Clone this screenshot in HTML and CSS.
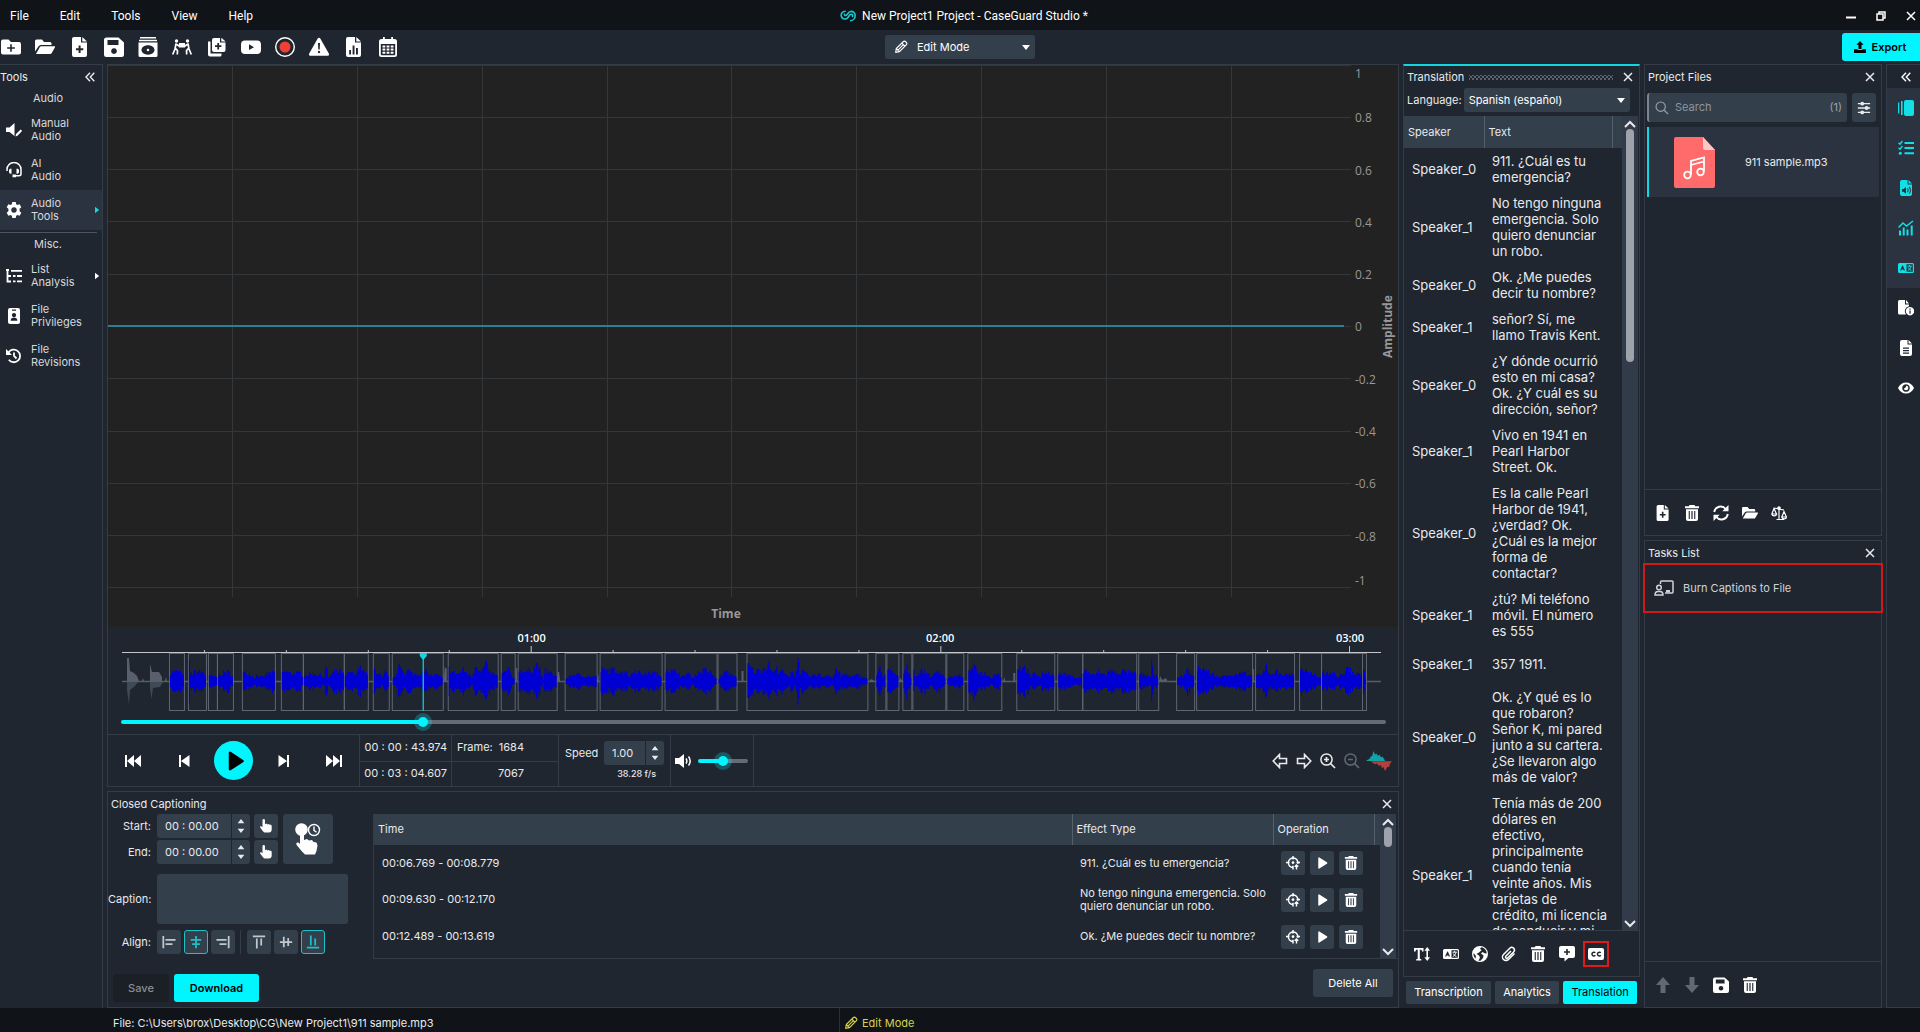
FILE: index.html
```html
<!DOCTYPE html>
<html lang="en">
<head>
<meta charset="utf-8">
<title>New Project1 Project - CaseGuard Studio</title>
<link rel="stylesheet" href="styles.css">
</head>
<body>
<svg class="sprite" aria-hidden="true">
  <symbol id="folder-plus" viewBox="0 0 20 20"><path fill-rule="evenodd" d="M2 2.500h5.500l2.500 2.500h8a2 2 0 0 1 2 2v8.500a2 2 0 0 1-2 2H2a2 2 0 0 1-2-2v-11a2 2 0 0 1 2-2zM9.200 7.200v3H6.200v1.600h3v3h1.600v-3h3v-1.600h-3v-3z"/></symbol>
  <symbol id="folder-open" viewBox="0 0 20 20"><path d="M0 14.500V4a1.500 1.500 0 0 1 1.500-1.500H7l2 2.500h6a1.500 1.500 0 0 1 1.500 1.500V8H6a3 3 0 0 0-2.600 1.500zM1 17l3.700-6.700A2 2 0 0 1 6.400 9.300H19.500c.500 0 .700.500.500.900l-3.400 6.100a1.500 1.500 0 0 1-1.300.7z"/></symbol>
  <symbol id="file-plus" viewBox="0 0 20 20"><path fill-rule="evenodd" d="M4 0h7v5.500h6V18a2 2 0 0 1-2 2H4a2 2 0 0 1-2-2V2a2 2 0 0 1 2-2zM12.300 0L17 4.400h-4.700zM8.600 8.500v2.700H6v2h2.600v2.700h2v-2.700h2.700v-2h-2.700V8.500z"/></symbol>
  <symbol id="save" viewBox="0 0 20 20"><path fill-rule="evenodd" d="M2.500.500h12L20 5.500v12a2.500 2.500 0 0 1-2.500 2.500h-15A2.500 2.500 0 0 1 0 17.500V3A2.500 2.500 0 0 1 2.500.500zM3.500 3v5h11V3zM10 11.200a2.900 2.900 0 1 0 .01 0z"/></symbol>
  <symbol id="disc-box" viewBox="0 0 20 20"><path fill-rule="evenodd" d="M2 0h16v1.500H2zM1 2.700h18v1.500H1zM.500 5.500h19v13a1.500 1.500 0 0 1-1.500 1.500H2a1.500 1.500 0 0 1-1.500-1.500zM10 8.300c-4 0-6.500 2.200-6.500 4.700s2.500 4.700 6.500 4.700 6.500-2.200 6.500-4.700-2.500-4.700-6.500-4.700zM10 11.700a1.300 1.300 0 1 1 0 2.600 1.300 1.300 0 0 1 0-2.600z"/></symbol>
  <symbol id="carry" viewBox="0 0 20 20"><circle cx="4.500" cy="4" r="1.700"/><circle cx="15.500" cy="4" r="1.700"/><path d="M7 6h6v4.500H7z"/><path d="M4 6.500l-.8 4.500L5.500 13.500 5.300 17.500M3.200 11.500L.700 17.500M4 7L7.500 9.300M16 6.500l.800 4.500L14.500 13.500l.2 4M16.800 11.500l2.500 6M16 7l-3.500 2.300" fill="none" stroke="currentColor" stroke-width="1.700"/></symbol>
  <symbol id="files-plus" viewBox="0 0 20 20"><path fill-rule="evenodd" d="M7 1h6v4.500h5.500V13a2 2 0 0 1-2 2H7a2 2 0 0 1-2-2V3a2 2 0 0 1 2-2zM14.300.700l4.400 3.800h-4.400zM10.300 6v2.300H8v1.800h2.300v2.300h1.800v-2.300h2.300V8.300h-2.300V6z"/><path d="M1 4.500h2.500V16a.5.5 0 0 0 .5.500h10.500V18a1.500 1.500 0 0 1-1.500 1.500H3a2 2 0 0 1-2-2z"/></symbol>
  <symbol id="video" viewBox="0 0 20 20"><path fill-rule="evenodd" d="M4 3.500h12a4 4 0 0 1 4 4v5.500a4 4 0 0 1-4 4H4a4 4 0 0 1-4-4V7.500a4 4 0 0 1 4-4zM8 7.300v5.800l5-2.900z"/></symbol>
  <symbol id="record" viewBox="0 0 20 20"><circle cx="10" cy="10" r="9.300" fill="none" stroke="currentColor" stroke-width="1.400"/><circle cx="10" cy="10" r="5.500" fill="#ef4036"/></symbol>
  <symbol id="warning" viewBox="0 0 20 20"><path fill-rule="evenodd" d="M10 .800c.6 0 1 .3 1.300.8l8.500 15c.6 1.100-.1 2.200-1.300 2.200h-17C.3 18.800-.4 17.700.2 16.600l8.500-15c.3-.5.700-.8 1.300-.8zM9 6l.3 6.500h1.400L11 6zM10 13.800a1.200 1.200 0 1 0 .01 0z"/></symbol>
  <symbol id="file-chart" viewBox="0 0 20 20"><path fill-rule="evenodd" d="M4 0h7v5.500h6V18a2 2 0 0 1-2 2H4a2 2 0 0 1-2-2V2a2 2 0 0 1 2-2zM12.300 0L17 4.400h-4.700zM5.200 13v4.500H7V13zM8.600 8.500v9h1.900v-9zM12 11v6.500h1.900V11z"/></symbol>
  <symbol id="calendar" viewBox="0 0 20 20"><path fill-rule="evenodd" d="M5 0h1.800v2h6.400V0H15v2h1.500A2.500 2.500 0 0 1 19 4.500v13a2.500 2.500 0 0 1-2.500 2.500h-13A2.500 2.500 0 0 1 1 17.500v-13A2.500 2.500 0 0 1 3.500 2H5zM2.800 7v10.500c0 .5.400.8.800.8h12.800c.4 0 .8-.3.800-.8V7z"/><path d="M4.500 8.500h2.800v2H4.500zm4.100 0h2.800v2H8.600zm4.100 0h2.800v2h-2.800zM4.500 11.600h2.800v2H4.500zm4.100 0h2.800v2H8.600zm4.100 0h2.800v2h-2.800zM4.500 14.700h2.800v2H4.500zm4.100 0h2.800v2H8.600zm4.100 0h2.800v2h-2.800z"/></symbol>
  <symbol id="pencil" viewBox="0 0 16 16"><path d="M2 14l.6-4.300L10.500 2a2 2 0 0 1 2.800 0l.7.7a2 2 0 0 1 0 2.800L6.200 13.300zM9 3.600l3.400 3.400M4.500 11.500L11 5M2.600 9.700l3.600 3.600" fill="none" stroke="currentColor" stroke-width="1.300"/></symbol>
  <symbol id="upload" viewBox="0 0 16 16"><path d="M8 0l4.800 5H10v5.500H6V5H3.200zM0 11h4.800v1h6.400v-1H16v5H0z"/></symbol>
  <symbol id="logo" viewBox="0 0 16 12"><path d="M5.800 1.200C2.300 1.200.8 3.800 1.200 6c.5 2.600 3.300 3.600 5.600 2.500M4.800 3.600c-1 1.400.2 2.400 1.600 1.600C7.800 4.300 8.300 2 10.600 1.500c2.500-.5 4.600 1.400 4.600 4 0 3-2.300 5.300-5.200 5.300M6.800 8.500C9 7.300 9 4.300 11.200 4.300c1.500 0 2 1.500.9 2.800" fill="none" stroke="currentColor" stroke-width="1.600"/></symbol>
  <symbol id="minimize" viewBox="0 0 10 10"><path d="M0 5.500h10v2H0z"/></symbol>
  <symbol id="restore" viewBox="0 0 10 10"><path d="M1 3h6v6H1zM3 3V1h6v6H7" fill="none" stroke="currentColor" stroke-width="1.500"/></symbol>
  <symbol id="close" viewBox="0 0 10 10"><path d="M1 1l8 8M9 1L1 9" fill="none" stroke="currentColor" stroke-width="1.500"/></symbol>
  <symbol id="chevrons" viewBox="0 0 10 10"><path d="M5 .8L1 5l4 4.200M9.300.800L5.300 5l4 4.200" fill="none" stroke="currentColor" stroke-width="1.400"/></symbol>
  <symbol id="speaker-edit" viewBox="0 0 16 16"><path d="M0 5.500h3.500L8.500 1v13l-5-4H0zM9.500 14.500l.5-2.500 4.700-4.600 1.500 1.500-4.700 4.800z"/></symbol>
  <symbol id="headset" viewBox="0 0 16 16"><path d="M1 9V7.500a7 7 0 0 1 14 0v4.300a2 2 0 0 1-2 2H9.500" fill="none" stroke="currentColor" stroke-width="1.500"/><path d="M4 6.800h1.500v5H4.500A2 2 0 0 1 3 10V8zM12 6.800h-1.500v5h1A2 2 0 0 0 13 10V8zM6.500 12.500h3.500v2.700H6.500z"/></symbol>
  <symbol id="gear" viewBox="0 0 16 16"><path fill-rule="evenodd" d="M6.300 0h3.400l.5 2.300 1.200.7 2.200-.7 1.700 2.900-1.700 1.600v2.400l1.700 1.600-1.700 2.900-2.200-.7-1.200.7-.5 2.300H6.300l-.5-2.300-1.200-.7-2.200.7L.7 10.800l1.700-1.600V6.800L.7 5.200l1.700-2.900 2.200.7 1.200-.7zM8 5.200a2.800 2.800 0 1 0 .01 0z"/></symbol>
  <symbol id="list-tree" viewBox="0 0 16 16"><path d="M0 2h3M1.500 2v11.500H5M1.500 8H5M5 2.800h11M7 8h2.500M11 8h5M7 13.300h2.500M11 13.300h5" fill="none" stroke="currentColor" stroke-width="1.800"/></symbol>
  <symbol id="id-badge" viewBox="0 0 16 16"><path fill-rule="evenodd" d="M4 0h8a2 2 0 0 1 2 2v12a2 2 0 0 1-2 2H4a2 2 0 0 1-2-2V2a2 2 0 0 1 2-2zM6 1.500v1.200h4V1.500zM8 5a2.100 2.100 0 1 0 .01 0zM4.700 12.700h6.600c0-2-1.100-2.900-2.300-2.900H7c-1.200 0-2.300.9-2.300 2.900z"/></symbol>
  <symbol id="history" viewBox="0 0 16 16"><path d="M2.500 4.500a6.300 6.300 0 1 1 .3 7.300M8 4.500V8l2.500 2.500" fill="none" stroke="currentColor" stroke-width="1.800"/><path d="M0 1v6h6z"/></symbol>
  <symbol id="skip-start" viewBox="0 0 16 16"><path d="M0 2h2v12H0zM9 2v12L2 8zM16 2v12L9 8z"/></symbol>
  <symbol id="skip-end" viewBox="0 0 16 16"><path d="M14 2h2v12h-2zM7 2v12l7-6zM0 2v12l7-6z"/></symbol>
  <symbol id="step-back" viewBox="0 0 16 16"><path d="M3 2h2v12H3zM13.500 2v12L5 8z"/></symbol>
  <symbol id="step-fwd" viewBox="0 0 16 16"><path d="M11 2h2v12h-2zM2.500 2v12L11 8z"/></symbol>
  <symbol id="play" viewBox="0 0 16 16"><path d="M3 1.500a1 1 0 0 1 1.500-.9l10 6.500a1 1 0 0 1 0 1.800l-10 6.500a1 1 0 0 1-1.500-.9z"/></symbol>
  <symbol id="volume" viewBox="0 0 16 16"><path d="M0 5h4l5-4v14l-5-4H0z"/><path d="M11 5.500c1 1.500 1 3.500 0 5M13.500 3.500c2 2.700 2 6.300 0 9" fill="none" stroke="currentColor" stroke-width="1.500"/></symbol>
  <symbol id="arrow-left" viewBox="0 0 16 16"><path d="M1.200 8L7.500 1.500v4h7v5h-7v4z" fill="none" stroke="currentColor" stroke-width="1.600"/></symbol>
  <symbol id="arrow-right" viewBox="0 0 16 16"><path d="M14.800 8L8.500 1.500v4h-7v5h7v4z" fill="none" stroke="currentColor" stroke-width="1.600"/></symbol>
  <symbol id="zoom-in" viewBox="0 0 16 16"><path d="M10.500 10.500L15 15M6.500 4v5M4 6.500h5" fill="none" stroke="currentColor" stroke-width="1.700"/><circle cx="6.500" cy="6.500" r="5.600" fill="none" stroke="currentColor" stroke-width="1.500"/></symbol>
  <symbol id="zoom-out" viewBox="0 0 16 16"><path d="M10.500 10.500L15 15M4 6.500h5" fill="none" stroke="currentColor" stroke-width="1.700"/><circle cx="6.500" cy="6.500" r="5.600" fill="none" stroke="currentColor" stroke-width="1.500"/></symbol>
  <symbol id="wave-icon" viewBox="0 0 26 20"><path d="M0 10l2-1.500 1.500-.5L5 5l1 .5L7.500 0 9 3.500l1.500-1L12 5l1.500-1.500L15 6.500l1.500-1L18 8l1 2z" fill="#12a3a8"/><path d="M5 10.300h21l-2 2.500-1 3.500-1.500-.5L19 20l-1.500-4-1.500 1-1.500-3-1.500 1L11 12.500l-2 .8-2-1.300z" fill="#b0413e"/></symbol>
  <symbol id="hand" viewBox="0 0 16 16"><path d="M4 1.500a1.400 1.400 0 0 1 2.800 0V6l1.700-.8 1.200 1 1.500-.6 1.100 1.100c1.500-.4 2.200.3 2.200 1.500V12c0 2-1.200 3.500-3.200 3.500H7.500c-1.300 0-2.200-.5-3-1.500L1.300 9.700c-.6-1 .7-2 1.700-1.200L4 9.300z"/></symbol>
  <symbol id="hand-clock" viewBox="0 0 26 32"><circle cx="6.500" cy="6.500" r="6.300"/><path d="M5 10h4v7l3-1 2 1.500 3-.5 1.500 2 3 .5 1 3-1 5.500-1.500 3.500H10l-3-3-5-6c-2-2.500.500-3.500 2-2.500L5 21z"/><circle cx="19" cy="7" r="5.500" fill="none" stroke="currentColor" stroke-width="1.400"/><path d="M19 3.500v3.800l2.500 2" fill="none" stroke="currentColor" stroke-width="1.400"/></symbol>
  <symbol id="al-left" viewBox="0 0 16 16"><path d="M1.500 1v14M4 5.500h11.500M4 10.500h8" fill="none" stroke="currentColor" stroke-width="2"/></symbol>
  <symbol id="al-center" viewBox="0 0 16 16"><path d="M8 1v14M2 5.500h12M3.500 10.500h9" fill="none" stroke="currentColor" stroke-width="2"/></symbol>
  <symbol id="al-right" viewBox="0 0 16 16"><path d="M14.500 1v14M.5 5.500H12M4 10.500h8" fill="none" stroke="currentColor" stroke-width="2"/></symbol>
  <symbol id="al-top" viewBox="0 0 16 16"><path d="M1 1.500h14M5.500 4v11.500M10.500 4v8" fill="none" stroke="currentColor" stroke-width="2"/></symbol>
  <symbol id="al-middle" viewBox="0 0 16 16"><path d="M1 8h14M5.500 2v12M10.500 3.500v9" fill="none" stroke="currentColor" stroke-width="2"/></symbol>
  <symbol id="al-bottom" viewBox="0 0 16 16"><path d="M1 14.500h14M5.500.5V12M10.500 4v8" fill="none" stroke="currentColor" stroke-width="2"/></symbol>
  <symbol id="target" viewBox="0 0 16 16"><path d="M8 0v4M0 7.500h4M8 11v4.500M13.500 9A5.500 5.500 0 1 0 8 13.300M8 6v3M6.500 7.500h3" fill="none" stroke="currentColor" stroke-width="1.700"/><path d="M12 15.500v-5M10 12.300l2-2 2 2M12 7.500h4" fill="none" stroke="currentColor" stroke-width="1.600"/></symbol>
  <symbol id="trash" viewBox="0 0 16 16"><path fill-rule="evenodd" d="M5.500 0h5l.7 1.200H15v2H1v-2h3.800zM2 4.300h12V14a2 2 0 0 1-2 2H4a2 2 0 0 1-2-2zM4.700 6v8h1.100V6zm2.700 0v8h1.200V6zm2.800 0v8h1.100V6z"/></symbol>
  <symbol id="refresh" viewBox="0 0 16 16"><path d="M1.200 7a6.500 6.500 0 0 1 11.500-3M14.800 9a6.500 6.500 0 0 1-11.500 3" fill="none" stroke="currentColor" stroke-width="1.900"/><path d="M15.500 0v6.300H9.300zM.5 16V9.700h6.200z"/></symbol>
  <symbol id="scales" viewBox="0 0 16 16"><path d="M3 3l10 2M8 2v13M5.500 14.500H13M3 3.500L.8 9h4.700zM13 6.500L10.800 12h4.600zM1 9.500c.5 1.800 4 1.800 4.500 0M11 12.500c.5 1.800 4 1.800 4.400 0" fill="none" stroke="currentColor" stroke-width="1.200"/><circle cx="8" cy="3" r="1.800"/></symbol>
  <symbol id="presenter" viewBox="0 0 20 16"><path d="M6.500 4V2a1 1 0 0 1 1-1H18a1 1 0 0 1 1 1v10a1 1 0 0 1-1 1h-7M1 15c0-2.500 1.500-3.500 3-3.500h2c1.500 0 3 1 3 3.500z" fill="none" stroke="currentColor" stroke-width="1.500"/><circle cx="5" cy="7.500" r="2.300" fill="none" stroke="currentColor" stroke-width="1.500"/><path d="M12 10h4v2.500h-4z"/></symbol>
  <symbol id="arrow-up" viewBox="0 0 16 16"><path d="M8 0l7 8h-4.500v8h-5V8H1z"/></symbol>
  <symbol id="arrow-down" viewBox="0 0 16 16"><path d="M8 16l7-8h-4.500V0h-5v8H1z"/></symbol>
  <symbol id="text-height" viewBox="0 0 16 16"><path d="M0 2h9.500v3.500H8l-.5-1.700H5.800v9l1.500.4v1.300H2.200v-1.300l1.500-.4v-9H2l-.5 1.700H0zM13.200 1l2.800 3.700h-2v6.600h2L13.200 15l-2.800-3.700h2V4.700h-2z"/></symbol>
  <symbol id="lang-box" viewBox="0 0 16 16"><path fill-rule="evenodd" d="M1.500 3h13A1.500 1.500 0 0 1 16 4.500v7a1.500 1.500 0 0 1-1.500 1.500h-13A1.500 1.500 0 0 1 0 11.500v-7A1.500 1.500 0 0 1 1.500 3zM8.500 4.200v7.600h6.300V4.200zM4.300 5.500L2 10.500h1.300l.4-1h1.600l.4 1H7L4.900 5.500z"/><path d="M9.500 6.200h4.300M11.600 5v1.200M13 6.500c-.5 2-1.700 3.300-3.300 4.200M10.300 7.500c.7 1.500 1.700 2.500 3.200 3.200" fill="none" stroke="currentColor" stroke-width="1"/></symbol>
  <symbol id="globe" viewBox="0 0 16 16"><path fill-rule="evenodd" d="M8 0a8 8 0 1 1 0 16A8 8 0 0 1 8 0zM9.500 1.300L8 2.500l1.500 1.700L7 6.500 4.500 8 7 9.500l1 2-1.500 3.200 2 .1L11 12l.5-2.500L9 7.500l1.500-1.500 2 1.200 2.200.3c0-3-2.200-5.500-5.200-6.200zM1.500 7L4 10l-.5 2.500C2 11.300 1.200 9 1.500 7z"/></symbol>
  <symbol id="clip" viewBox="0 0 16 16"><path d="M13.500 7.500l-6 6a3.500 3.500 0 0 1-5-5l6.300-6.300a2.600 2.600 0 0 1 3.800 3.700l-6 6a1.200 1.200 0 0 1-1.800-1.700L10 5" fill="none" stroke="currentColor" stroke-width="1.500"/></symbol>
  <symbol id="comment-plus" viewBox="0 0 16 16"><path fill-rule="evenodd" d="M2 0h12a2 2 0 0 1 2 2v8a2 2 0 0 1-2 2H9.500L5.500 15.500V12H2a2 2 0 0 1-2-2V2a2 2 0 0 1 2-2zM7.200 3v2.300H5v1.500h2.200V9h1.600V6.800H11V5.300H8.800V3z"/></symbol>
  <symbol id="cc" viewBox="0 0 16 16"><path fill-rule="evenodd" d="M2 2h12a2 2 0 0 1 2 2v8a2 2 0 0 1-2 2H2a2 2 0 0 1-2-2V4a2 2 0 0 1 2-2z"/><path d="M7.300 6.800a1.900 1.900 0 1 0 0 2.500M12.800 6.800a1.900 1.900 0 1 0 0 2.500" fill="none" stroke="#20262f" stroke-width="1.500"/></symbol>
  <symbol id="search" viewBox="0 0 16 16"><circle cx="6.500" cy="6.500" r="5.300" fill="none" stroke="currentColor" stroke-width="1.300"/><path d="M10.500 10.500L15 15" stroke="currentColor" stroke-width="1.500"/></symbol>
  <symbol id="sliders" viewBox="0 0 16 16"><path d="M1 3h14M1 8h14M1 13h14" stroke="currentColor" stroke-width="1.500"/><circle cx="6" cy="3" r="2.200"/><circle cx="11" cy="8" r="2.200"/><circle cx="6" cy="13" r="2.200"/></symbol>
  <symbol id="cards" viewBox="0 0 16 16"><rect x="6" width="10" height="16" rx="2"/><path d="M3 1h1.600v14H3zM0 2.500h1.300v11H0z"/></symbol>
  <symbol id="checklist" viewBox="0 0 16 16"><path d="M6.500 3H16M6.500 8H16M6.500 13.300H16" stroke="currentColor" stroke-width="1.900"/><path d="M.5 2.800l1.500 1.400L4.500 1M.5 7.800L2 9.200 4.500 6" fill="none" stroke="currentColor" stroke-width="1.300"/><circle cx="2.300" cy="13.300" r="1.500"/></symbol>
  <symbol id="file-audio" viewBox="0 0 16 16"><path fill-rule="evenodd" d="M4 0h5.500v4.500H14V14a2 2 0 0 1-2 2H4a2 2 0 0 1-2-2V2a2 2 0 0 1 2-2zM10.500 0L14 3.500h-3.500zM4 9v2.700h1.500L8 13.700V7L5.500 9zM9 8.700c.8.800.8 2.300 0 3.200l.7.700c1.300-1.400 1.300-3.300 0-4.600zM10.700 7.200c1.700 1.800 1.700 4.400 0 6.200l.7.700c2.100-2.200 2.100-5.400 0-7.600z"/></symbol>
  <symbol id="trend" viewBox="0 0 16 16"><path d="M.5 7.500L5 3l3.500 3L15 1" fill="none" stroke="currentColor" stroke-width="1.500"/><path d="M2 15.500V10.500M5.700 15.500V7.500M9.500 15.500V9.500M13.700 15.500V5.500" stroke="currentColor" stroke-width="2"/></symbol>
  <symbol id="file-info" viewBox="0 0 16 16"><path d="M1.500 0H7v4.500h4v1.800A5 5 0 0 0 8 14.500H1.500A1.500 1.500 0 0 1 0 13V1.500A1.500 1.500 0 0 1 1.500 0zM8 0l3 3.500H8z"/><path fill-rule="evenodd" d="M12 7a4.200 4.200 0 1 1-.01 0zM11.400 8.500v1.300h1.200V8.500zm0 2v3.300h1.200v-3.300z"/></symbol>
  <symbol id="file-text" viewBox="0 0 16 16"><path fill-rule="evenodd" d="M4 0h5.500v4.500H14V14a2 2 0 0 1-2 2H4a2 2 0 0 1-2-2V2a2 2 0 0 1 2-2zM10.500 0L14 3.500h-3.500zM5 7.500v1.200h6V7.500zm0 2.500v1.200h6V10zm0 2.500v1.200h6v-1.200z"/></symbol>
  <symbol id="eye" viewBox="0 0 16 16"><path fill-rule="evenodd" d="M8 2.500c3.500 0 6.500 2 8 5.500-1.500 3.500-4.500 5.500-8 5.500S1.500 11.500 0 8c1.500-3.500 4.500-5.500 8-5.500zM8 4.200a3.800 3.800 0 1 0 .01 0zM8 5.700a2.300 2.300 0 1 1-2.200 2.500c1.300.3 2.300-1 2.200-2.500z"/></symbol>
  <symbol id="music-file" viewBox="0 0 41 51"><path d="M2 0h27l12 13v36a2 2 0 0 1-2 2H2a2 2 0 0 1-2-2V2a2 2 0 0 1 2-2z" fill="#ff6b6b"/><path d="M29 0l12 13H31a2 2 0 0 1-2-2z" fill="#ffc6c6"/><path d="M17 37.500V24l13-3.500V34M17 28l13-3.500" fill="none" stroke="#fff" stroke-width="1.800"/><circle cx="13.500" cy="38" r="3.300" fill="none" stroke="#fff" stroke-width="1.800"/><circle cx="26.500" cy="35" r="3.300" fill="none" stroke="#fff" stroke-width="1.800"/></symbol>
  <symbol id="tri-up" viewBox="0 0 8 6"><path d="M4 0l4 5H0z"/></symbol>
  <symbol id="tri-down" viewBox="0 0 8 6"><path d="M4 6L0 1h8z"/></symbol>
  <symbol id="tri-right" viewBox="0 0 6 8"><path d="M0 0l5 4-5 4z"/></symbol>
  <symbol id="caret-up" viewBox="0 0 12 8"><path d="M1 7l5-5 5 5" fill="none" stroke="currentColor" stroke-width="2"/></symbol>
  <symbol id="caret-down" viewBox="0 0 12 8"><path d="M1 1l5 5 5-5" fill="none" stroke="currentColor" stroke-width="2"/></symbol>
</svg>

<div class="app">
  <header class="titlebar">
    <nav class="menu"><a href="#">File</a><a href="#">Edit</a><a href="#">Tools</a><a href="#">View</a><a href="#">Help</a></nav>
    <div class="app-title"><svg class="logo"><use href="#logo"/></svg><span>New Project1 Project - CaseGuard Studio *</span></div>
    <div class="win-controls">
      <button aria-label="Minimize"><svg class="i10"><use href="#minimize"/></svg></button>
      <button aria-label="Restore"><svg class="i10"><use href="#restore"/></svg></button>
      <button aria-label="Close window"><svg class="i10"><use href="#close"/></svg></button>
    </div>
  </header>

  <div class="toolbar">
    <div class="tool-icons">
      <button aria-label="New project"><svg class="i20"><use href="#folder-plus"/></svg></button>
      <button aria-label="Open project"><svg class="i20"><use href="#folder-open"/></svg></button>
      <button aria-label="Add file"><svg class="i20"><use href="#file-plus"/></svg></button>
      <button aria-label="Save project"><svg class="i20"><use href="#save"/></svg></button>
      <button aria-label="Disc archive"><svg class="i20"><use href="#disc-box"/></svg></button>
      <button aria-label="Transfer"><svg class="i20"><use href="#carry"/></svg></button>
      <button aria-label="Add many files"><svg class="i20"><use href="#files-plus"/></svg></button>
      <button aria-label="Video"><svg class="i20"><use href="#video"/></svg></button>
      <button aria-label="Record"><svg class="i20"><use href="#record"/></svg></button>
      <button aria-label="Warnings"><svg class="i20"><use href="#warning"/></svg></button>
      <button aria-label="Report"><svg class="i20"><use href="#file-chart"/></svg></button>
      <button aria-label="Calendar"><svg class="i20"><use href="#calendar"/></svg></button>
    </div>
    <div class="select mode-select">
      <svg class="i14"><use href="#pencil"/></svg>
      <select aria-label="Mode"><option>Edit Mode</option></select>
      <svg class="drop"><use href="#tri-down"/></svg>
    </div>
    <button class="export"><svg class="i12"><use href="#upload"/></svg>Export</button>
  </div>

  <main class="workspace">
    <aside class="tools">
      <div class="tools-head"><span>Tools</span><button aria-label="Collapse tools"><svg class="i10"><use href="#chevrons"/></svg></button></div>
      <h3>Audio</h3>
      <button class="tool"><svg class="i16"><use href="#speaker-edit"/></svg><span>Manual<br>Audio</span></button>
      <button class="tool"><svg class="i16"><use href="#headset"/></svg><span>AI<br>Audio</span></button>
      <button class="tool on"><svg class="i16"><use href="#gear"/></svg><span>Audio<br>Tools</span><svg class="more"><use href="#tri-right"/></svg></button>
      <hr>
      <h3>Misc.</h3>
      <button class="tool"><svg class="i16"><use href="#list-tree"/></svg><span>List<br>Analysis</span><svg class="more"><use href="#tri-right"/></svg></button>
      <button class="tool"><svg class="i16"><use href="#id-badge"/></svg><span>File<br>Privileges</span></button>
      <button class="tool"><svg class="i16"><use href="#history"/></svg><span>File<br>Revisions</span></button>
    </aside>

    <div class="center">
      <section class="panel player">
        <div class="chart">
          <svg class="plot" id="plot"></svg>
          <div class="y-labels"><span>1</span><span>0.8</span><span>0.6</span><span>0.4</span><span>0.2</span><span>0</span><span>-0.2</span><span>-0.4</span><span>-0.6</span><span>-0.8</span><span>-1</span></div>
          <div class="y-title">Amplitude</div>
          <div class="x-title">Time</div>
        </div>
        <div class="timeline">
          <div class="minutes"><span>01:00</span><span>02:00</span><span>03:00</span></div>
          <svg class="waveform" id="waveform" viewBox="122 646 1262 66" preserveAspectRatio="none"></svg>
          <input class="seek" type="range" aria-label="Position" min="0" max="1000" value="237">
        </div>
        <div class="transport">
          <div class="buttons">
            <button aria-label="To start"><svg class="i16"><use href="#skip-start"/></svg></button>
            <button aria-label="Step back"><svg class="i16"><use href="#step-back"/></svg></button>
            <button class="play" aria-label="Play"><svg class="i20"><use href="#play"/></svg></button>
            <button aria-label="Step forward"><svg class="i16"><use href="#step-fwd"/></svg></button>
            <button aria-label="To end"><svg class="i16"><use href="#skip-end"/></svg></button>
          </div>
          <div class="stack times"><span>00 : 00 : 43.974</span><span>00 : 03 : 04.607</span></div>
          <div class="stack frames"><span><i>Frame:</i>1684</span><span>7067</span></div>
          <div class="speed">
            <label for="speed">Speed</label>
            <div class="spin"><input id="speed" value="1.00"><div class="steps"><button aria-label="Faster"><svg><use href="#tri-up"/></svg></button><button aria-label="Slower"><svg><use href="#tri-down"/></svg></button></div></div>
            <small>38.28 f/s</small>
          </div>
          <div class="vol"><svg class="i16"><use href="#volume"/></svg><input type="range" aria-label="Volume" min="0" max="100" value="50"></div>
          <div class="view-tools">
            <button aria-label="Previous"><svg class="i16"><use href="#arrow-left"/></svg></button>
            <button aria-label="Next"><svg class="i16"><use href="#arrow-right"/></svg></button>
            <button aria-label="Zoom in"><svg class="i16"><use href="#zoom-in"/></svg></button>
            <button aria-label="Zoom out" class="dim"><svg class="i16"><use href="#zoom-out"/></svg></button>
            <button aria-label="Waveform"><svg class="wave-icon"><use href="#wave-icon"/></svg></button>
          </div>
        </div>
      </section>

      <section class="panel captions">
        <div class="panel-head"><span>Closed Captioning</span><button aria-label="Close captions"><svg class="i10"><use href="#close"/></svg></button></div>
        <div class="cc-body">
          <form class="cc-form">
            <div class="cc-times">
              <label for="start">Start:</label>
              <div class="spin"><input id="start" value="00 : 00.00"><div class="steps"><button type="button" aria-label="Start up"><svg><use href="#tri-up"/></svg></button><button type="button" aria-label="Start down"><svg><use href="#tri-down"/></svg></button></div></div>
              <button type="button" class="sq" aria-label="Pick start"><svg class="i14"><use href="#hand"/></svg></button>
              <button type="button" class="sq big" aria-label="Pick time"><svg class="hand-clock"><use href="#hand-clock"/></svg></button>
              <label for="end">End:</label>
              <div class="spin"><input id="end" value="00 : 00.00"><div class="steps"><button type="button" aria-label="End up"><svg><use href="#tri-up"/></svg></button><button type="button" aria-label="End down"><svg><use href="#tri-down"/></svg></button></div></div>
              <button type="button" class="sq" aria-label="Pick end"><svg class="i14"><use href="#hand"/></svg></button>
            </div>
            <div class="cc-row"><label for="caption">Caption:</label><textarea id="caption"></textarea></div>
            <div class="cc-row cc-align"><span class="lbl">Align:</span>
              <div class="aligns">
                <button type="button" class="sq" aria-label="Left"><svg class="i14"><use href="#al-left"/></svg></button>
                <button type="button" class="sq on" aria-label="Center"><svg class="i14"><use href="#al-center"/></svg></button>
                <button type="button" class="sq" aria-label="Right"><svg class="i14"><use href="#al-right"/></svg></button>
                <span class="sep"></span>
                <button type="button" class="sq" aria-label="Top"><svg class="i14"><use href="#al-top"/></svg></button>
                <button type="button" class="sq" aria-label="Middle"><svg class="i14"><use href="#al-middle"/></svg></button>
                <button type="button" class="sq on" aria-label="Bottom"><svg class="i14"><use href="#al-bottom"/></svg></button>
              </div>
            </div>
            <div class="cc-actions"><button type="button" class="btn save" disabled>Save</button><button type="button" class="btn cyan">Download</button></div>
          </form>
          <div class="cc-list">
            <div class="scroll-area">
              <table class="cc-table">
                <colgroup><col><col class="c-effect"><col class="c-op"><col class="c-end"></colgroup>
                <thead><tr><th>Time</th><th>Effect Type</th><th>Operation</th><th></th></tr></thead>
                <tbody>
                  <tr><td>00:06.769 - 00:08.779</td><td>911. ¿Cuál es tu emergencia?</td><td><div class="ops"><button class="sq" aria-label="Go to"><svg class="i14"><use href="#target"/></svg></button><button class="sq" aria-label="Play"><svg class="i12"><use href="#play"/></svg></button><button class="sq" aria-label="Delete"><svg class="i14"><use href="#trash"/></svg></button></div></td><td></td></tr>
                  <tr><td>00:09.630 - 00:12.170</td><td>No tengo ninguna emergencia. Solo quiero denunciar un robo.</td><td><div class="ops"><button class="sq" aria-label="Go to"><svg class="i14"><use href="#target"/></svg></button><button class="sq" aria-label="Play"><svg class="i12"><use href="#play"/></svg></button><button class="sq" aria-label="Delete"><svg class="i14"><use href="#trash"/></svg></button></div></td><td></td></tr>
                  <tr><td>00:12.489 - 00:13.619</td><td>Ok. ¿Me puedes decir tu nombre?</td><td><div class="ops"><button class="sq" aria-label="Go to"><svg class="i14"><use href="#target"/></svg></button><button class="sq" aria-label="Play"><svg class="i12"><use href="#play"/></svg></button><button class="sq" aria-label="Delete"><svg class="i14"><use href="#trash"/></svg></button></div></td><td></td></tr>
                </tbody>
              </table>
              <div class="scrollbar"><svg><use href="#caret-up"/></svg><div class="track"><div class="thumb small"></div></div><svg><use href="#caret-down"/></svg></div>
            </div>
            <button class="btn delete-all">Delete All</button>
          </div>
        </div>
      </section>
    </div>

    <div class="translation-col">
      <section class="panel translation">
        <div class="panel-head"><span>Translation</span><i class="grip"></i><button aria-label="Close translation"><svg class="i10"><use href="#close"/></svg></button></div>
        <div class="language"><label for="lang">Language:</label>
          <div class="select"><select id="lang"><option>Spanish (español)</option></select><svg class="drop"><use href="#tri-down"/></svg></div>
        </div>
        <div class="scroll-area">
          <table class="tr-table">
            <colgroup><col class="c-speaker"><col><col class="c-rest"></colgroup>
            <thead><tr><th>Speaker</th><th>Text</th><th></th></tr></thead>
            <tbody>
              <tr><td>Speaker_0</td><td colspan="2">911. ¿Cuál es tu emergencia?</td></tr>
              <tr><td>Speaker_1</td><td colspan="2">No tengo ninguna emergencia. Solo quiero denunciar un robo.</td></tr>
              <tr><td>Speaker_0</td><td colspan="2">Ok. ¿Me puedes decir tu nombre?</td></tr>
              <tr><td>Speaker_1</td><td colspan="2">señor? Sí, me llamo Travis Kent.</td></tr>
              <tr><td>Speaker_0</td><td colspan="2">¿Y dónde ocurrió esto en mi casa? Ok. ¿Y cuál es su dirección, señor?</td></tr>
              <tr><td>Speaker_1</td><td colspan="2">Vivo en 1941 en Pearl Harbor Street. Ok.</td></tr>
              <tr><td>Speaker_0</td><td colspan="2">Es la calle Pearl Harbor de 1941, ¿verdad? Ok. ¿Cuál es la mejor forma de contactar?</td></tr>
              <tr><td>Speaker_1</td><td colspan="2">¿tú? Mi teléfono móvil. El número es 555</td></tr>
              <tr><td>Speaker_1</td><td colspan="2">357 1911.</td></tr>
              <tr><td>Speaker_0</td><td colspan="2">Ok. ¿Y qué es lo que robaron? Señor K, mi pared junto a su cartera. ¿Se llevaron algo más de valor?</td></tr>
              <tr><td>Speaker_1</td><td colspan="2">Tenía más de 200 dólares en efectivo, principalmente cuando tenía veinte años. Mis tarjetas de<br>crédito, mi licencia de conducir y mi teléfono.</td></tr>
            </tbody>
          </table>
          <div class="scrollbar"><svg><use href="#caret-up"/></svg><div class="track"><div class="thumb"></div></div><svg><use href="#caret-down"/></svg></div>
        </div>
        <div class="icon-row">
          <button aria-label="Text size"><svg class="i16"><use href="#text-height"/></svg></button>
          <button aria-label="Translate"><svg class="i16"><use href="#lang-box"/></svg></button>
          <button aria-label="Web"><svg class="i16"><use href="#globe"/></svg></button>
          <button aria-label="Attach"><svg class="i16"><use href="#clip"/></svg></button>
          <button aria-label="Delete"><svg class="i16"><use href="#trash"/></svg></button>
          <button aria-label="Add comment"><svg class="i16"><use href="#comment-plus"/></svg></button>
          <button aria-label="Closed captions" class="marked"><svg class="i16"><use href="#cc"/></svg></button>
        </div>
      </section>
      <div class="tabs"><button>Transcription</button><button>Analytics</button><button class="on">Translation</button></div>
    </div>

    <div class="files-col">
      <section class="panel files">
        <div class="panel-head"><span>Project Files</span><button aria-label="Close project files"><svg class="i10"><use href="#close"/></svg></button></div>
        <div class="search-row">
          <div class="search"><svg class="i14"><use href="#search"/></svg><input placeholder="Search" aria-label="Search"><span>(1)</span></div>
          <button class="filter" aria-label="Filter"><svg class="i14"><use href="#sliders"/></svg></button>
        </div>
        <div class="file"><svg class="file-icon"><use href="#music-file"/></svg><span>911 sample.mp3</span></div>
        <div class="icon-row foot">
          <button aria-label="Add file"><svg class="i16"><use href="#file-plus"/></svg></button>
          <button aria-label="Delete file"><svg class="i16"><use href="#trash"/></svg></button>
          <button aria-label="Refresh"><svg class="i16"><use href="#refresh"/></svg></button>
          <button aria-label="Open folder"><svg class="i16"><use href="#folder-open"/></svg></button>
          <button aria-label="Compare"><svg class="i16"><use href="#scales"/></svg></button>
        </div>
      </section>
      <section class="panel tasks">
        <div class="panel-head"><span>Tasks List</span><button aria-label="Close tasks"><svg class="i10"><use href="#close"/></svg></button></div>
        <div class="task"><svg class="presenter"><use href="#presenter"/></svg><span>Burn Captions to File</span></div>
        <div class="icon-row foot">
          <button aria-label="Move up" class="dim"><svg class="i16"><use href="#arrow-up"/></svg></button>
          <button aria-label="Move down" class="dim"><svg class="i16"><use href="#arrow-down"/></svg></button>
          <button aria-label="Save tasks"><svg class="i16"><use href="#save"/></svg></button>
          <button aria-label="Delete task"><svg class="i16"><use href="#trash"/></svg></button>
        </div>
      </section>
    </div>

    <aside class="panel dock">
      <button class="expand" aria-label="Expand"><svg class="i10"><use href="#chevrons"/></svg></button>
      <button class="on" aria-label="Project files"><svg class="i16"><use href="#cards"/></svg></button>
      <button class="on" aria-label="Tasks"><svg class="i16"><use href="#checklist"/></svg></button>
      <button class="on" aria-label="Audio file"><svg class="i16"><use href="#file-audio"/></svg></button>
      <button class="on" aria-label="Analytics"><svg class="i16"><use href="#trend"/></svg></button>
      <button class="on" aria-label="Translation"><svg class="i16"><use href="#lang-box"/></svg></button>
      <button aria-label="File info"><svg class="i16"><use href="#file-info"/></svg></button>
      <button aria-label="Notes"><svg class="i16"><use href="#file-text"/></svg></button>
      <button aria-label="Preview"><svg class="i16"><use href="#eye"/></svg></button>
    </aside>
  </main>

  <footer class="status">
    <span class="path">File: C:\Users\brox\Desktop\CG\New Project1\911 sample.mp3</span>
    <span class="mode"><svg class="i14"><use href="#pencil"/></svg>Edit Mode</span>
  </footer>
</div>
<script src="script.js"></script>
</body>
</html>
```
FILE: styles.css
```css
:root {
  --bg: #20262f;
  --line: #343c48;
  --raised: #343f4c;
  --active: #2b3340;
  --cyan: #00f5ff;
  --text: #e8eaed;
}
* { box-sizing: border-box; }
html, body { height: 100%; margin: 0; }
body { background: var(--bg); color: var(--text); font: 11px/13px Inter, "Liberation Sans", sans-serif; overflow: hidden; }
button, input, select, textarea { font: inherit; color: inherit; background: none; border: 0; padding: 0; margin: 0; outline: 0; }
button { display: flex; align-items: center; justify-content: center; flex: none; }
svg { display: block; flex: none; fill: currentColor; }
i { font-style: normal; }
h3 { margin: 0; font: inherit; }
.sprite { position: absolute; width: 0; height: 0; }
.i10 { width: 10px; height: 10px; }
.i12 { width: 12px; height: 12px; }
.i14 { width: 14px; height: 14px; }
.i16 { width: 16px; height: 16px; }
.i20 { width: 20px; height: 20px; }
.dim { color: #626973; }

.app { height: 100vh; display: flex; flex-direction: column; }

.titlebar { height: 30px; flex: none; display: grid; grid-template-columns: 1fr auto 1fr; align-items: center; padding-top: 2px; background: #101317; font: 12px/16px Roboto, sans-serif; color: #fff; }
.menu { display: flex; gap: 31px; padding-left: 10px; }
.menu a { color: inherit; text-decoration: none; }
.app-title { display: flex; align-items: center; gap: 6px; padding-left: 8px; }
.logo { width: 16px; height: 12px; color: #19c8cf; }
.win-controls { display: flex; justify-content: flex-end; gap: 20px; padding-right: 4px; }

.toolbar { height: 34px; flex: none; display: grid; grid-template-columns: 1fr 150px 1fr; align-items: center; }
.tool-icons { display: flex; justify-content: space-between; width: 398px; padding-left: 1px; color: #fff; }
.select { position: relative; display: flex; align-items: center; height: 24px; border-radius: 3px; background: var(--raised); color: #fff; }
.select select { appearance: none; flex: 1; width: 100%; height: 100%; padding-left: 5px; }
.select option { background: var(--raised); }
.drop { width: 8px; height: 6px; position: absolute; right: 5px; top: 9px; pointer-events: none; }
.mode-select > .i14 { margin-left: 9px; }
.mode-select select { padding-left: 9px; }
.export { justify-self: end; width: 78px; height: 28px; gap: 6px; padding-right: 2px; border-radius: 3px 0 0 3px; background: var(--cyan); color: #000; font-weight: 600; }

.workspace { flex: 1; min-height: 0; display: grid; grid-template-columns: 103px minmax(0, 1fr) 237px 238px 34px; gap: 4px; }
.panel { border: 1px solid var(--line); }
.panel-head { display: flex; align-items: center; justify-content: space-between; height: 22px; flex: none; padding: 0 6px 0 3px; }

.tools { border-top: 1px solid var(--line); border-right: 1px solid var(--line); color: #d5d9de; overflow: hidden; }
.tools-head { display: flex; justify-content: space-between; align-items: center; height: 24px; padding-right: 7px; color: var(--text); }
.tools h3 { height: 21px; line-height: 18px; padding-right: 6px; text-align: center; }
.tools hr { height: 1px; margin: 2px 5px 2px 0; border: 0; background: #4d5663; }
.tool { width: 100%; height: 40px; justify-content: flex-start; gap: 9px; padding: 0 2px 0 6px; text-align: left; }
.tool > .i16 { color: #fff; }
.tool span { flex: 1; }
.tool .more { width: 5px; height: 8px; color: #fff; }
.tool.on { background: var(--active); }
.tool.on .more { color: #14d8df; }

.center { display: flex; flex-direction: column; gap: 4px; min-height: 0; }
.player { flex: 1; min-height: 0; display: flex; flex-direction: column; }
.chart { flex: 1; min-height: 0; display: grid; grid-template-columns: minmax(0, 1fr) 29px 18px; grid-template-rows: minmax(0, 1fr) 30px; background: #222; color: #989898; font: 12px/16px "Open Sans", sans-serif; }
.plot { width: 100%; height: 100%; grid-area: 1 / 1; }
.plot line { stroke: #343739; shape-rendering: crispEdges; }
.plot .zero { stroke: #2b7f95; stroke-width: 2; }
.y-labels { grid-area: 1 / 2; display: grid; grid-template-rows: 1fr repeat(9, 2fr) 1fr; align-items: center; padding: 1px 0 8px 4px; white-space: nowrap; }
.y-labels span:first-child { align-self: start; }
.y-labels span:last-child { align-self: end; }
.y-title { grid-area: 1 / 3; writing-mode: vertical-rl; transform: rotate(180deg); text-align: center; font-weight: 700; padding-top: 8px; }
.x-title { grid-area: 2 / 1; text-align: center; font-weight: 700; padding: 9px 7px 0 0; }

.timeline { height: 107px; flex: none; padding: 3px 15px 0 14px; }
.minutes { height: 16px; display: grid; grid-template-columns: 33.6% 32.4% 32.5%; font: 600 11px/16px "Open Sans", sans-serif; color: #fff; }
.minutes span { justify-self: end; }
.waveform { width: 100%; height: 66px; }
.seek, .vol input { appearance: none; display: block; background: none; }
.seek { --at: 24%; width: calc(100% + 4px); height: 18px; margin: 1px -3px 0 -1px; }
input[type="range"]::-webkit-slider-runnable-track { height: 4px; border-radius: 2px; background: linear-gradient(to right, var(--cyan) var(--at), #656b75 var(--at)); }
input[type="range"]::-webkit-slider-thumb { appearance: none; width: 10px; height: 10px; margin-top: -3px; border-radius: 50%; background: var(--cyan); box-shadow: 0 0 0 4px rgba(0, 245, 255, .25); }
.vol input { --at: 50%; width: 50px; height: 18px; }

.transport { height: 52px; flex: none; display: flex; border-top: 1px solid var(--line); }
.buttons { width: 251px; display: flex; align-items: center; justify-content: space-between; padding: 0 17px; color: #fff; }
.play { width: 39px; height: 39px; border-radius: 50%; background: var(--cyan); color: #000; margin: 0 -12px; padding-left: 2px; }
.stack { display: grid; grid-template-rows: 1fr 1fr; border-left: 1px solid var(--line); }
.stack span { display: flex; align-items: center; justify-content: flex-end; }
.stack span + span { border-top: 1px solid var(--line); }
.times { width: 92px; white-space: nowrap; }
.times span { padding-right: 4px; }
.frames { width: 107px; }
.frames span { padding: 0 34px 0 5px; }
.frames i { flex: 1; }
.speed { width: 112px; border-left: 1px solid var(--line); display: grid; grid-template-columns: 34px 60px; grid-template-rows: 24px 16px; column-gap: 5px; align-items: center; padding: 6px 0 0 6px; }
.speed small { grid-column: 1 / 3; justify-self: end; padding-right: 8px; font-size: 9px; font-weight: 500; }
.spin { display: flex; height: 24px; border-radius: 3px; background: var(--raised); }
.spin input { width: 0; flex: 1; padding-left: 8px; }
.steps { width: 19px; border-left: 1px solid var(--bg); display: flex; flex-direction: column; justify-content: space-between; padding: 5px 5px; }
.steps svg { width: 8px; height: 5px; }
.vol { width: 84px; border-left: 1px solid var(--line); border-right: 1px solid var(--line); display: flex; align-items: center; gap: 7px; padding-left: 4px; color: #fff; }
.view-tools { margin-left: auto; display: flex; align-items: center; gap: 8px; padding-right: 6px; }
.view-tools .wave-icon { width: 26px; height: 20px; margin-left: -2px; }

.captions { flex: none; height: 217px; display: flex; flex-direction: column; }
.captions .panel-head { height: 24px; }
.cc-body { flex: 1; display: grid; grid-template-columns: 265px minmax(0, 1fr); min-height: 0; }
.cc-form label, .lbl { width: 44px; text-align: right; padding-right: 1px; }
.cc-times { display: grid; grid-template-columns: 44px 94px 24px 51px; column-gap: 4px; row-gap: 2px; align-items: center; margin-top: -2px; }
.cc-times .spin { margin-left: 1px; }
.sq { width: 24px; height: 24px; border-radius: 3px; background: var(--raised); color: #fff; }
.sq.big { width: 50px; height: 50px; grid-column: 4; grid-row: 1 / 3; justify-self: end; }
.hand-clock { width: 26px; height: 32px; }
.cc-row { display: flex; align-items: center; gap: 5px; }
.cc-row textarea { width: 191px; height: 50px; border-radius: 3px; background: var(--raised); resize: none; }
.cc-times + .cc-row { margin: 10px 0 6px; }
.aligns { display: flex; gap: 3px; }
.aligns .sq { color: #c2c7cd; }
.aligns .sq.on { border: 1px solid #1cc0c7; color: #1cc0c7; }
.sep { width: 1px; height: 24px; margin: 0 3px 0 2px; background: var(--line); }
.btn { height: 28px; border-radius: 3px; background: var(--raised); color: #fff; }
.cc-actions { display: flex; gap: 5px; padding: 20px 0 0 5px; }
.save { width: 56px; background: #1b2027; color: #8a8f96; font-weight: 500; }
.cyan { width: 85px; background: var(--cyan); color: #000; font-weight: 600; }
.cc-list { display: flex; flex-direction: column; align-items: flex-end; min-height: 0; margin-top: -2px; }
.scroll-area { display: flex; align-items: flex-start; min-height: 0; overflow: hidden; }
.cc-list .scroll-area { width: 100%; height: 145px; padding-right: 2px; border-left: 1px solid var(--line); border-bottom: 1px solid var(--line); }
table { border-collapse: collapse; table-layout: fixed; flex: 1; width: 0; }
th { font-weight: 400; text-align: left; background: var(--raised); border-right: 1px solid #56606c; padding: 0 4px; }
th:last-child { border-right: 0; }
.cc-table th { height: 31px; }
.cc-table td { height: 37px; padding: 0 0 0 8px; }
.cc-table tr:first-child td { height: 36px; }
.c-effect { width: 201px; }
.c-op { width: 101px; }
.c-end { width: 6px; }
.ops { display: flex; gap: 5px; }
.delete-all { width: 80px; margin: 10px 5px 0 0; }
.scrollbar { width: 16px; align-self: stretch; display: flex; flex-direction: column; align-items: center; padding: 4px 0 2px; background: #323b49; }
.scrollbar svg { width: 12px; height: 8px; }
.track { flex: 1; padding-top: 1px; }
.thumb { width: 8px; height: 233px; border-radius: 4px; background: #9ea2ab; }
.thumb.small { height: 20px; }

.translation-col { display: flex; flex-direction: column; min-height: 0; }
.translation { flex: 1; min-height: 0; display: flex; flex-direction: column; border-top: 2px solid #12d5dd; }
.grip { flex: 1; height: 5px; margin: 0 10px 0 5px; background: radial-gradient(circle, #868c95 1px, transparent 1px) 0 0 / 4px 4px, radial-gradient(circle, #868c95 1px, transparent 1px) 2px 2px / 4px 4px; opacity: .6; }
.language { display: flex; align-items: center; gap: 2px; height: 28px; flex: none; padding: 0 9px 4px 3px; }
.language .select { flex: 1; }
.translation .scroll-area { flex: 1; padding-right: 1px; }
.tr-table thead { font-size: 11px; }
.tr-table { font-size: 13px; line-height: 16px; }
.tr-table th { height: 32px; }
.tr-table td { height: 40px; padding: 5px 0 5px 8px; vertical-align: middle; }
.tr-table td + td { padding-right: 14px; }
.c-speaker { width: 80px; }
.c-rest { width: 10px; }
.icon-row { height: 46px; flex: none; display: flex; align-items: center; gap: 13px; padding-left: 10px; border-top: 1px solid var(--line); color: #fff; }
.icon-row .dim { color: #626973; }
.marked { outline: 2px solid #e01b1b; outline-offset: 3px; }
.tabs { height: 31px; flex: none; display: flex; gap: 4px; padding: 4px 3px 4px 3px; }
.tabs button { flex: 1 1 auto; background: var(--raised); color: #fff; border-radius: 2px; }
.tabs .on { background: var(--cyan); color: #000; }

.files-col { display: flex; flex-direction: column; gap: 4px; min-height: 0; }
.files-col .panel-head { padding-top: 2px; }
.files { flex: none; height: 472px; display: flex; flex-direction: column; }
.tasks { flex: 1; display: flex; flex-direction: column; }
.foot { margin-top: auto; }
.search-row { display: flex; gap: 5px; padding: 6px 5px 0 2px; height: 35px; flex: none; }
.search { flex: 1; display: flex; align-items: center; gap: 6px; padding: 0 5px 0 6px; background: var(--raised); border-left: 2px solid #7c848e; border-radius: 3px; color: #9ba1a9; }
.search input { flex: 1; width: 0; }
.search input::placeholder { color: #8e959e; }
.filter { width: 24px; background: var(--raised); border-radius: 3px; }
.file { display: flex; align-items: center; gap: 30px; height: 70px; margin: 5px 2px 0 2px; padding-left: 25px; background: var(--active); border-left: 2px solid #14d8df; }
.file-icon { width: 41px; height: 51px; }
.task { height: 50px; margin: 0 -2px; padding-left: 9px; display: flex; align-items: center; gap: 9px; border: 2px solid #d01a1a; color: #cfd3d8; }
.presenter { width: 20px; height: 16px; }

.dock { border-right: 0; overflow: hidden; color: #fff; }
.dock button { width: 100%; height: 40px; padding-left: 5px; }
.dock .expand { height: 23px; }
.dock .on { background: var(--active); color: #12dfe6; }

.status { height: 24px; flex: none; display: flex; background: #101317; }
.path { width: 840px; padding: 9px 0 0 113px; border-right: 1px solid #2a2f37; }
.mode { display: flex; align-items: center; gap: 4px; padding: 6px 0 0 4px; color: #d6d250; }
```
FILE: script.js
```js
const NS = 'http://www.w3.org/2000/svg';
function add(parent, tag, attrs) {
  const el = document.createElementNS(NS, tag);
  for (const k in attrs) el.setAttribute(k, attrs[k]);
  parent.appendChild(el);
  return el;
}

// Amplitude chart grid
const plot = document.getElementById('plot');
for (let i = 1; i < 10; i++) add(plot, 'line', { x1: i * 10.04 + '%', x2: i * 10.04 + '%', y1: 0, y2: '100%' });
for (let i = 0; i < 11; i++) {
  const y = i * 9.83 + '%';
  add(plot, 'line', { x1: 0, x2: '100%', y1: y, y2: y });
  if (i === 5) add(plot, 'line', { class: 'zero', x1: 0, x2: '99.4%', y1: y, y2: y });
}

// Timeline ruler, caption segments and waveform
const wave = document.getElementById('waveform');
const segments = [[169,184],[188,206],[208,217],[217,233],[242,275],[281,303],[303,344],[344,368],[373,389],[392,443],[448,498],[501,515],[518,557],[565,597],[600,662],[665,717],[718,737],[747,868],[876,886],[887,899],[903,912],[913,946],[947,964],[968,1002],[1017,1055],[1058,1083],[1083,1137],[1139,1159],[1177,1195],[1197,1253],[1256,1295],[1300,1322],[1322,1363],[1363,1367]];
const peaks = [169,8,173,10,179,10,183,6,188,28,190,8,195,10,203,10,205,6,208,6,213,5,216,4,219,7,225,10,230,9,232,5,242,9,250,8,254,4,257,7,262,4,266,8,272,9,275,8,281,9,286,10,293,8,300,9,303,6,305,7,313,8,320,7,324,5,326,16,328,4,334,10,341,10,344,6,346,6,350,10,354,7,359,14,364,9,368,6,374,12,379,8,382,3,385,10,388,5,392,2,397,8,400,18,405,8,408,12,413,7,419,8,425,10,432,6,437,7,442,3,448,14,452,10,458,8,463,12,468,8,472,5,476,20,480,9,486,17,490,9,497,6,502,8,508,12,513,4,518,6,520,12,527,10,534,14,537,18,540,10,543,2,545,12,550,9,556,6,566,3,575,8,582,6,590,5,597,5,601,12,608,11,615,12,622,9,627,12,629,4,634,12,640,9,646,8,652,10,660,6,666,14,672,10,678,11,681,4,688,9,692,4,698,9,706,12,713,7,715,3,719,3,725,10,733,7,736,4,747,18,755,10,762,13,769,17,773,9,777,13,783,10,789,4,792,14,795,4,798,24,800,10,803,10,810,5,818,8,823,5,828,8,832,3,837,13,841,6,846,8,852,5,858,7,867,3,876,6,880,13,883,5,888,12,893,9,898,6,903,6,907,14,911,5,913,16,916,5,922,11,928,9,932,4,938,13,942,8,945,4,948,4,955,5,962,6,968,7,973,16,980,9,986,8,991,4,997,9,1001,6,1018,14,1023,16,1029,10,1031,3,1035,10,1040,4,1044,10,1050,9,1054,7,1058,8,1065,7,1076,4,1081,4,1084,12,1090,9,1094,6,1099,10,1105,7,1111,12,1117,8,1122,11,1130,9,1136,8,1140,8,1148,6,1151,5,1152,20,1154,6,1158,5,1177,5,1184,5,1188,12,1193,6,1197,12,1203,14,1210,9,1215,7,1220,4,1228,8,1234,6,1243,9,1250,6,1256,8,1262,6,1267,17,1270,8,1277,10,1285,7,1294,8,1300,2,1301,14,1306,11,1313,7,1320,4,1323,12,1328,8,1333,10,1338,4,1346,11,1350,13,1355,8,1361,7,1363,17,1366,4];
let seed = 7;
function noise() { seed = (seed * 16807) % 2147483647; return seed / 2147483647; }
function level(x) {
  for (let i = 2; i < peaks.length; i += 2) {
    if (x <= peaks[i]) {
      const t = (x - peaks[i - 2]) / (peaks[i] - peaks[i - 2]);
      return peaks[i - 1] + (peaks[i + 1] - peaks[i - 1]) * Math.max(0, t);
    }
  }
  return 0;
}
add(wave, 'path', { d: 'M122 681.500H1382', stroke: '#565d67', 'stroke-width': 1.5 });
// Unvoiced audio before the first caption and in the pauses
add(wave, 'path', { fill: '#59606b', d: 'M127 681V658l2 0 1 13 4 2 3 3 2 5zM150 681V664l2 8 7 0 3 5v4zM142 681l1-3 1 3zM165 681l1-4 1 4zM444 681l1-14 2 2v12zM516 681V668h1.500V681zM557 681l1-9h1.500l1 9zM597 681l2-7v7zM742 681V671h2V681zM870 681l2-2 3 2zM900 681l1-3 2 3zM1004 681l1-4 1 4zM1014 681V673h2v8zM1160 681l1-5 2 4 4-2 1 3zM1254 681V669h1v12z' });
add(wave, 'path', { fill: '#3f4a57', d: 'M127 682v8l2 14 1-14 5-4 3-4zM150 682v6l1.500 11 1.500-11 7-1 3-5z' });
let d = '';
for (const [a, b] of segments) {
  add(wave, 'rect', { x: a + .5, y: 653.5, width: b - a, height: 57, fill: 'none', stroke: '#606772' });
  for (let x = a + 1; x < b; x++) {
    const h = level(x) * (.65 + noise() * .6);
    d += `M${x + .5} ${(681.5 - h).toFixed(1)}V${(681.5 + h * (.8 + noise() * .25)).toFixed(1)}`;
  }
}
add(wave, 'path', { d, stroke: '#0000d2', 'stroke-width': 1.1 });
let ruler = 'M122 652.500H1382';
for (let i = 1; i <= 15; i++) ruler += `M${Math.round(122 + i * 81.85) + .5} 652V${i % 5 ? 650 : 646}`;
add(wave, 'path', { d: ruler, stroke: '#c3c6ca', fill: 'none' });
add(wave, 'path', { d: 'M423.500 653V711', stroke: '#12b6bd', 'stroke-width': 1.5 });
add(wave, 'path', { d: 'M420 653h7v3l-3.500 4-3.500-4z', fill: '#12d5dd' });
```
